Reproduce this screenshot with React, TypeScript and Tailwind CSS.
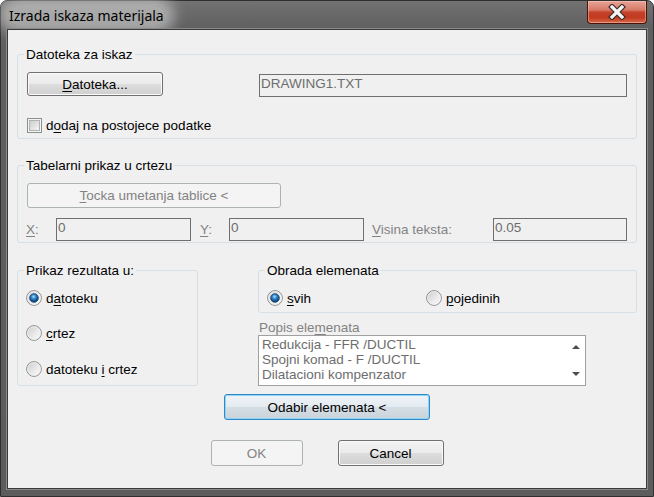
import React from 'react';

const Mn = ({ children }: { children: React.ReactNode }) => (
  <span className="underline decoration-1 underline-offset-[2px]">{children}</span>
);

type BtnVariant = 'normal' | 'default' | 'disabled';

const buttonLook: Record<BtnVariant, string> = {
  normal:
    'border-[#707070] bg-[linear-gradient(#f2f2f2_0%,#ebebeb_48%,#dddddd_52%,#cfcfcf_100%)] text-black shadow-[inset_0_0_0_1px_#fbfbfb]',
  default:
    'border-[#2f86c8] bg-[linear-gradient(#eef3f7_0%,#e4ebf0_48%,#d5dee4_52%,#c9d3da_100%)] text-black shadow-[inset_0_0_0_1px_#8fd6f6]',
  disabled: 'border-[#adb2b5] bg-[#f4f4f4] text-[#838383]',
};

function Button({
  className = '',
  variant = 'normal',
  children,
}: {
  className?: string;
  variant?: BtnVariant;
  children: React.ReactNode;
}) {
  return (
    <div
      className={`flex items-center justify-center rounded-[3px] border leading-[15px] ${buttonLook[variant]} ${className}`}
    >
      {children}
    </div>
  );
}

function Field({ className = '', children }: { className?: string; children?: React.ReactNode }) {
  return (
    <div
      className={`h-[23px] border border-[#6f6f6f] bg-[#f0f0f0] pl-[1px] pt-[1px] leading-[15px] text-[#6d6d6d] ${className}`}
    >
      {children}
    </div>
  );
}

function Group({
  title,
  className = '',
  legendClass = '',
  children,
}: {
  title: React.ReactNode;
  className?: string;
  legendClass?: string;
  children: React.ReactNode;
}) {
  return (
    <fieldset className={`rounded-[3px] border border-[#d5dfe5] ${className}`}>
      <legend className={`px-[2px] leading-[15px] ${legendClass}`}>{title}</legend>
      {children}
    </fieldset>
  );
}

function Radio({ checked = false }: { checked?: boolean }) {
  return (
    <svg width="16" height="16" viewBox="0 0 16 16" className="shrink-0">
      <defs>
        <linearGradient id="radioFill" x1="0" y1="0" x2="1" y2="1">
          <stop offset="0" stopColor="#c9c9c9" />
          <stop offset="0.6" stopColor="#ececec" />
          <stop offset="1" stopColor="#fbfbfb" />
        </linearGradient>
        <radialGradient id="radioDot" cx="0.45" cy="0.35" r="0.65">
          <stop offset="0" stopColor="#9ee0ff" />
          <stop offset="0.45" stopColor="#2a7cc4" />
          <stop offset="1" stopColor="#0b3563" />
        </radialGradient>
      </defs>
      <circle cx="8" cy="8" r="7.4" fill="url(#radioFill)" stroke="#8e8f8f" strokeWidth="1" />
      <circle cx="8" cy="8" r="6.3" fill="none" stroke="#f4f4f4" strokeWidth="0.8" />
      {checked && <circle cx="8" cy="8" r="4.3" fill="url(#radioDot)" stroke="#143f6c" strokeWidth="0.8" />}
    </svg>
  );
}

function Checkbox() {
  return (
    <svg width="15" height="15" viewBox="0 0 15 15" className="shrink-0">
      <defs>
        <linearGradient id="checkFill" x1="0" y1="0" x2="1" y2="1">
          <stop offset="0" stopColor="#cbcbcb" />
          <stop offset="1" stopColor="#f7f7f7" />
        </linearGradient>
      </defs>
      <rect x="0.5" y="0.5" width="14" height="14" fill="#f4f4f4" stroke="#8e8f8f" />
      <rect x="2.5" y="2.5" width="10" height="10" fill="url(#checkFill)" stroke="#b0b2b3" />
    </svg>
  );
}

function RadioItem({
  checked = false,
  className = '',
  children,
}: {
  checked?: boolean;
  className?: string;
  children: React.ReactNode;
}) {
  return (
    <div className={`flex h-[16px] items-center gap-[4px] ${className}`}>
      <Radio checked={checked} />
      <span className="leading-[15px]">{children}</span>
    </div>
  );
}

function CloseButton() {
  return (
    <div className="flex h-[23px] w-[60px] items-center justify-center rounded-b-[4px] border border-t-0 border-[#4a1309] bg-[linear-gradient(#e6a598_0%,#d77a67_40%,#c4412a_52%,#c23a20_75%,#d86a4b_100%)] shadow-[inset_0_0_0_1px_rgba(255,210,200,0.45)]">
      <svg width="20" height="16" viewBox="0 0 20 16">
        <path d="M5 3 L15 13 M15 3 L5 13" stroke="#3b2a28" strokeWidth="5.5" strokeLinecap="square" />
        <path d="M5 3 L15 13 M15 3 L5 13" stroke="#f4f4f4" strokeWidth="3.2" strokeLinecap="square" />
      </svg>
    </div>
  );
}

export default function App() {
  return (
    <div className="flex h-[497px] w-[654px] flex-col rounded-t-[7px] border border-[#2f2f2f] bg-[linear-gradient(#727272_0px,#5f5f5f_28px,#5c5c5c_100%)] px-[6px] pb-[7px] [font-family:'Liberation_Sans',Arial,sans-serif] text-[13.5px] text-black">
      {/* title bar */}
      <div className="flex h-[28px] items-start justify-between">
        <div className="pl-[1px] pt-[6px]">
          <span className="rounded-[12px] bg-[rgba(232,232,232,0.5)] px-[1px] text-[14px] leading-[18px] shadow-[0_0_14px_9px_rgba(232,232,232,0.55)] [font-family:'Noto_Sans',sans-serif]">
            Izrada iskaza materijala
          </span>
        </div>
        <CloseButton />
      </div>

      {/* client area */}
      <div className="flex flex-1 flex-col border border-[#3a3a3a] bg-[#f0f0f0] px-[9px] pt-[17px] shadow-[0_0_0_1px_#8a8a8a]">
        <Group title="Datoteka za iskaz" legendClass="-ml-[3px]" className="px-[9px] pb-[5px] pt-[10px]">
          <div className="flex items-start">
            <Button className="h-[24px] w-[136px]">
              <span>
                <Mn>D</Mn>atoteka...
              </span>
            </Button>
            <Field className="ml-auto mt-[2px] w-[368px]">DRAWING1.TXT</Field>
          </div>
          <div className="mt-[21px] flex h-[15px] items-center gap-[4px]">
            <Checkbox />
            <span className="leading-[15px]">
              d<Mn>o</Mn>daj na postojece podatke
            </span>
          </div>
        </Group>

        <Group
          title="Tabelarni prikaz u crtezu"
          legendClass="-ml-[3px]"
          className="mt-[19px] px-[9px] pb-[1px] pt-[10px]"
        >
          <Button variant="disabled" className="h-[25px] w-[254px]">
            <span>
              <Mn>T</Mn>ocka umetanja tablice &lt;
            </span>
          </Button>
          <div className="mt-[10px] flex items-start text-[#838383]">
            <span className="-ml-[1px] w-[30px] pt-[4px] leading-[15px]">
              <Mn>X</Mn>:
            </span>
            <Field className="w-[135px]">0</Field>
            <span className="w-[38px] pl-[9px] pt-[4px] leading-[15px]">
              <Mn>Y</Mn>:
            </span>
            <Field className="w-[135px]">0</Field>
            <span className="w-[129px] pl-[8px] pt-[4px] leading-[15px]">
              <Mn>V</Mn>isina teksta:
            </span>
            <Field className="w-[134px]">0.05</Field>
          </div>
        </Group>

        <div className="mt-[20px] flex items-start">
          <Group
            title="Prikaz rezultata u:"
            legendClass="-ml-[2px]"
            className="w-[181px] pb-[8px] pl-[8px] pt-[12px]"
          >
            <RadioItem checked>
              d<Mn>a</Mn>toteku
            </RadioItem>
            <RadioItem className="mt-[19px]">
              <Mn>c</Mn>rtez
            </RadioItem>
            <RadioItem className="mt-[20px]">
              datoteku <Mn>i</Mn> crtez
            </RadioItem>
          </Group>

          <div className="ml-auto flex w-[379px] flex-col">
            <Group title="Obrada elemenata" legendClass="-ml-[2px]" className="pb-[6px] pl-[8px] pt-[12px]">
              <div className="flex">
                <RadioItem checked className="w-[159px]">
                  <Mn>s</Mn>vih
                </RadioItem>
                <RadioItem>
                  <Mn>p</Mn>ojedinih
                </RadioItem>
              </div>
            </Group>
            <div className="mt-[8px] pl-[1px] leading-[14px] text-[#838383]">
              Popis ele<Mn>m</Mn>enata
            </div>
            <div className="flex h-[51px] w-[328px] border border-[#a0a0a0] bg-white text-[#6d6d6d]">
              <div className="flex-1 pl-[3px] pt-[1px] leading-[15px]">
                <div>Redukcija - FFR /DUCTIL</div>
                <div>Spojni komad - F /DUCTIL</div>
                <div>Dilatacioni kompenzator</div>
              </div>
              <div className="flex w-[17px] flex-col items-center justify-between py-[8px] pr-[2px]">
                <svg width="8" height="5" viewBox="0 0 8 5">
                  <path d="M0 5 L4 1 L8 5 Z" fill="#4d4d4d" />
                </svg>
                <svg width="8" height="5" viewBox="0 0 8 5">
                  <path d="M0 0 L8 0 L4 4 Z" fill="#4d4d4d" />
                </svg>
              </div>
            </div>
          </div>
        </div>

        <div className="mt-[8px] flex justify-center">
          <Button variant="default" className="h-[26px] w-[206px]">
            Odabir elemenata &lt;
          </Button>
        </div>

        <div className="mt-[20px] flex justify-center gap-[35px]">
          <Button variant="disabled" className="h-[26px] w-[92px]">
            OK
          </Button>
          <Button className="h-[26px] w-[106px]">Cancel</Button>
        </div>
      </div>
    </div>
  );
}
